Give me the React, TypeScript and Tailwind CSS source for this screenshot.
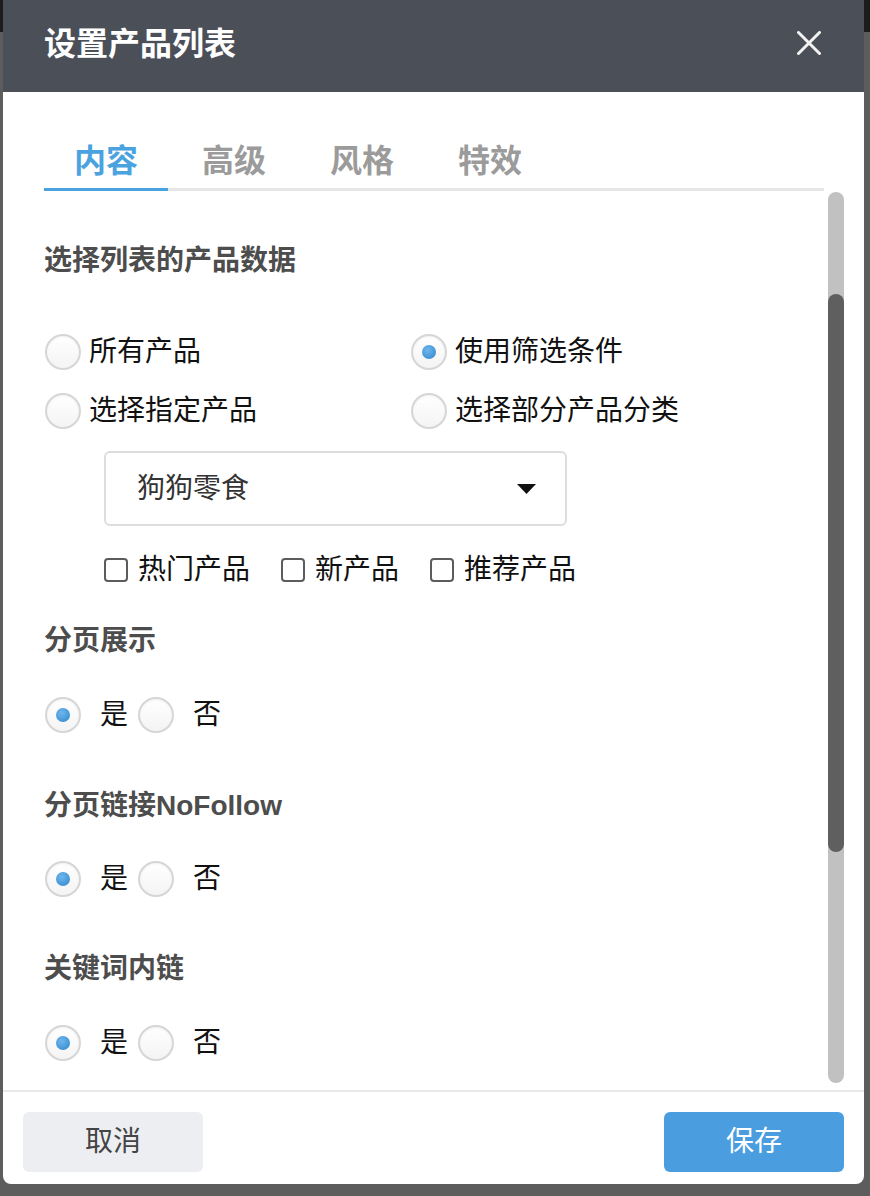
import React from 'react';

const FONT = { fontFamily: "'Liberation Sans', 'Noto Sans CJK SC', sans-serif" };

const tabs = ['内容', '高级', '风格', '特效'];

// Round radio with soft grey ring and blue dot
const Radio = ({ checked = false }: { checked?: boolean }) => (
  <span className="flex h-[36px] w-[36px] shrink-0 items-center justify-center rounded-full border-2 border-[#d6d6d6] bg-[linear-gradient(to_bottom,#ffffff,#f4f4f4)] shadow-[inset_0_1px_2px_rgba(0,0,0,0.06)]">
    {checked && (
      <span className="h-[14px] w-[14px] rounded-full bg-[radial-gradient(circle_at_40%_35%,#6db6ee,#2f86cb)]" />
    )}
  </span>
);

const Checkbox = () => (
  <span className="h-[24px] w-[24px] shrink-0 rounded-[4px] border-2 border-[#5c5c5c] bg-white" />
);

const SectionTitle = ({ children, className = '' }: { children: React.ReactNode; className?: string }) => (
  <h3 className={`text-[28px] font-bold leading-[36px] text-[#4d4d4d] ${className}`}>{children}</h3>
);

const YesNo = ({ className = '' }: { className?: string }) => (
  <div className={`flex h-[40px] items-center pl-px text-[28px] text-[#111] ${className}`}>
    <Radio checked />
    <span className="ml-[19px] mr-[10px]">是</span>
    <Radio />
    <span className="ml-[19px]">否</span>
  </div>
);

const App: React.FC = () => {
  return (
    <div
      className="h-[1196px] w-full overflow-hidden bg-[linear-gradient(to_bottom,#1c1c1c_0,#1c1c1c_32px,#5d5d5d_32px)]"
      style={FONT}
    >
      <div className="ml-[3px] flex h-[1184px] w-[861px] flex-col overflow-hidden rounded-b-[8px] bg-white">
        {/* Header */}
        <div className="flex h-[92px] shrink-0 items-center justify-between bg-[#4b4f58] pb-[4px] pl-[41px] pr-[43px]">
          <h2 className="text-[32px] font-bold leading-[40px] text-white">设置产品列表</h2>
          <svg width="24" height="24" viewBox="0 0 24 24" className="mb-[2px]">
            <path d="M1.5 1.5L22.5 22.5M22.5 1.5L1.5 22.5" stroke="#f2f2f2" strokeWidth="3" strokeLinecap="round" />
          </svg>
        </div>

        {/* Body */}
        <div className="flex flex-1 flex-col pb-[7px] pl-[41px] pr-[20px]">
          {/* Tabs */}
          <div className="mr-[20px] mt-[49px] flex gap-[4px] border-b-[3px] border-[#e6e6e6]">
            {tabs.map((t, i) => (
              <div
                key={t}
                className={`-mb-[3px] w-[124px] border-b-[3px] pb-[7px] text-center text-[32px] font-bold leading-[40px] ${
                  i === 0 ? 'border-[#4aa3df] text-[#4aa3df]' : 'border-transparent text-[#9b9b9b]'
                }`}
              >
                {t}
              </div>
            ))}
          </div>

          {/* Scroll area */}
          <div className="mt-[1px] flex h-[891px] overflow-hidden">
            <div className="flex-1 overflow-hidden">
              <SectionTitle className="mt-[51px]">选择列表的产品数据</SectionTitle>

              <div className="mt-[53px] grid grid-cols-[366px_1fr] gap-y-[19px] pl-px text-[28px] text-[#111]">
                <label className="flex h-[40px] items-center gap-[8px]">
                  <Radio />
                  <span>所有产品</span>
                </label>
                <label className="flex h-[40px] items-center gap-[8px]">
                  <Radio checked />
                  <span>使用筛选条件</span>
                </label>
                <label className="flex h-[40px] items-center gap-[8px]">
                  <Radio />
                  <span>选择指定产品</span>
                </label>
                <label className="flex h-[40px] items-center gap-[8px]">
                  <Radio />
                  <span>选择部分产品分类</span>
                </label>
              </div>

              {/* Category select */}
              <div className="ml-[60px] mt-[20px] flex h-[75px] w-[463px] items-center justify-between rounded-[6px] border-2 border-[#dddddd] pl-[31px] pr-[29px]">
                <span className="text-[28px] text-[#333]">狗狗零食</span>
                <svg width="19" height="10" viewBox="0 0 19 10">
                  <polygon points="0,0 19,0 9.5,10" fill="#111" />
                </svg>
              </div>

              {/* Product flags */}
              <div className="ml-[60px] mt-[26px] flex h-[36px] items-center text-[28px] text-[#111]">
                <Checkbox />
                <span className="ml-[10px] mr-[31px]">热门产品</span>
                <Checkbox />
                <span className="ml-[10px] mr-[31px]">新产品</span>
                <Checkbox />
                <span className="ml-[10px]">推荐产品</span>
              </div>

              <SectionTitle className="mt-[35px]">分页展示</SectionTitle>
              <YesNo className="mt-[36px]" />

              <SectionTitle className="mt-[53px]">分页链接NoFollow</SectionTitle>
              <YesNo className="mt-[35px]" />

              <SectionTitle className="mt-[52px]">关键词内链</SectionTitle>
              <YesNo className="mt-[36px]" />
            </div>

            {/* Scrollbar */}
            <div className="ml-[4px] flex w-[16px] flex-col rounded-full bg-[#c1c1c1]">
              <div className="h-[102px] shrink-0" />
              <div className="h-[558px] shrink-0 rounded-full bg-[#5f5f5f]" />
            </div>
          </div>
        </div>

        {/* Footer */}
        <div className="flex shrink-0 justify-between border-t-2 border-[#e8e8e8] px-[20px] pb-[12px] pt-[20px]">
          <button className="h-[60px] w-[180px] rounded-[6px] bg-[#edeef2] text-[28px] text-[#444]">取消</button>
          <button className="h-[60px] w-[180px] rounded-[6px] bg-[#4a9ddf] text-[28px] text-white">保存</button>
        </div>
      </div>
    </div>
  );
};

export default App;
